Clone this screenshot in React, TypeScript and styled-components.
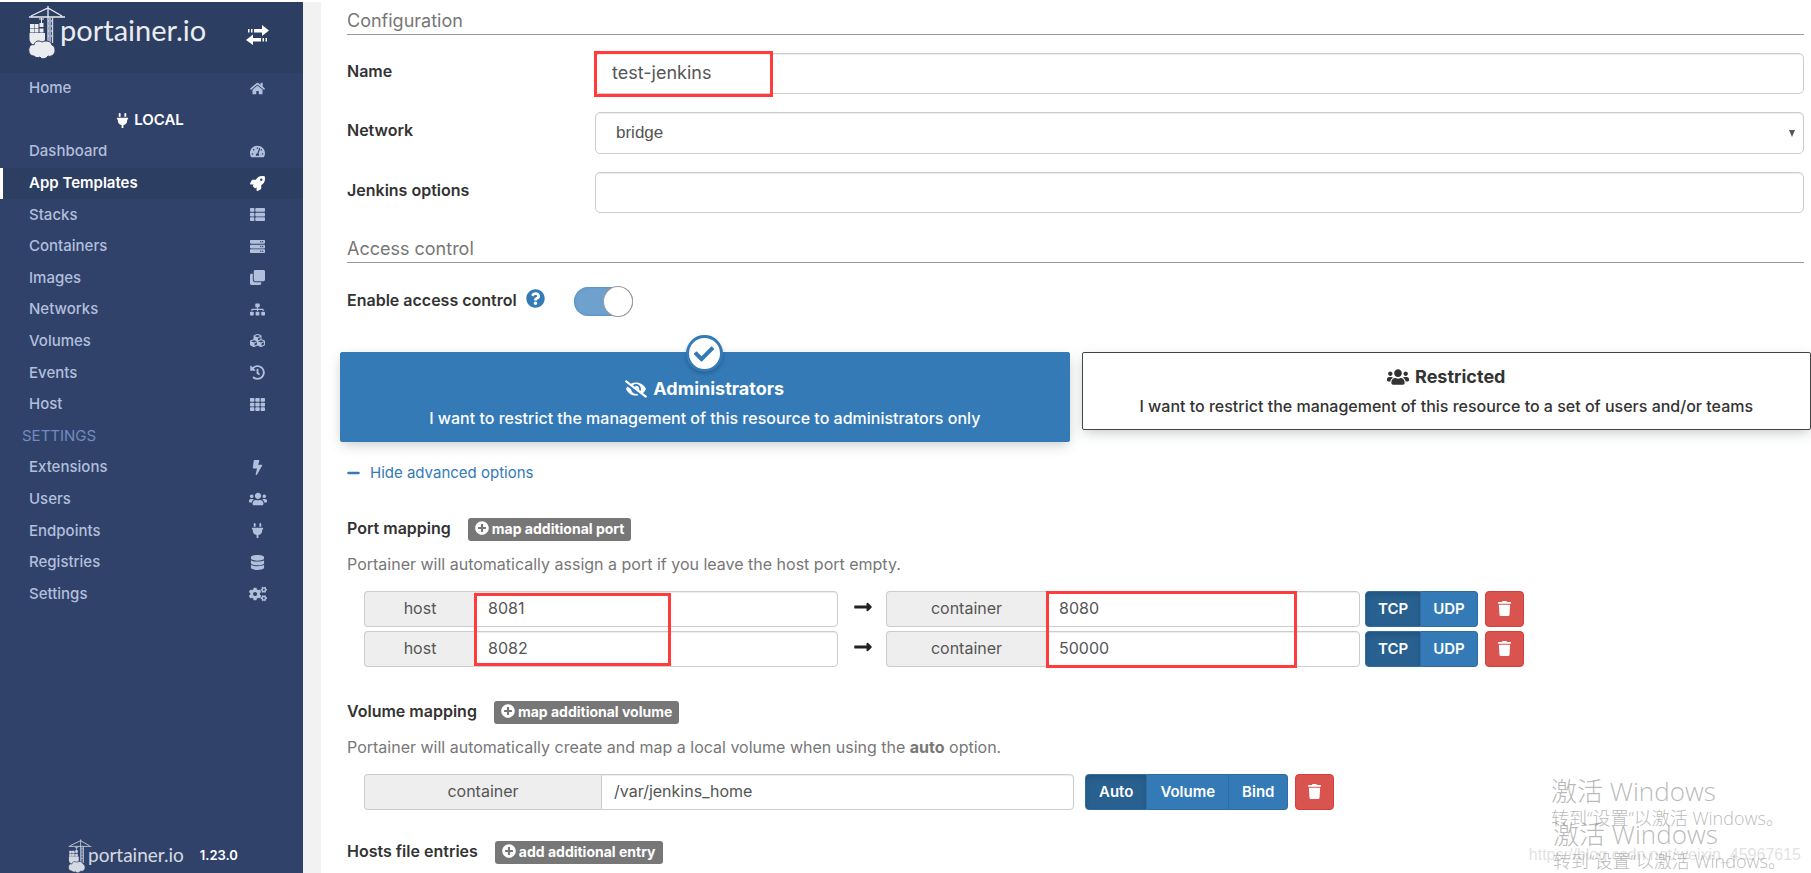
import React, { ReactNode } from "react";
import styled, { createGlobalStyle, css } from "styled-components";
import {
  FaBolt, FaCheck, FaClone, FaCogs, FaCubes, FaDatabase, FaEyeSlash, FaHistory, FaHome,
  FaLongArrowAltRight, FaMinus, FaPlug, FaPlusCircle, FaQuestionCircle, FaRocket, FaServer,
  FaSitemap, FaTachometerAlt, FaTh, FaThList, FaTrash, FaUsers,
} from "react-icons/fa";

const blue = "#337ab7";

const GlobalStyle = createGlobalStyle`
  *, *::before, *::after { box-sizing: border-box; }
  body {
    margin: 0;
    background: #fff;
    color: #333;
    font-family: Inter, "Noto Sans CJK SC", sans-serif;
    font-size: 15px;
    line-height: 20px;
  }
  button, input { font-family: inherit; }
`;

const Page = styled.div`
  position: relative;
  display: flex;
  height: 100vh;
  padding-top: 2px;
  overflow: hidden;
`;

/* ---------- sidebar ---------- */

const Sidebar = styled.aside`
  display: flex;
  flex: none;
  flex-direction: column;
  width: 303px;
  background: #30426a;
`;

const SidebarHeader = styled.div`
  display: flex;
  flex: none;
  align-items: flex-start;
  justify-content: space-between;
  height: 71px;
  padding: 4px 34px 0 28px;
  background: #2d3e63;
`;

const Brand = styled.a<{ $small?: boolean }>`
  display: flex;
  align-items: flex-start;
  color: #fff;
  font-family: Lato, sans-serif;
  font-size: ${(p) => (p.$small ? "19px" : "29px")};
  font-weight: 400;
  line-height: ${(p) => (p.$small ? "32px" : "48px")};
  text-decoration: none;
  opacity: ${(p) => (p.$small ? 0.8 : 0.9)};

  svg {
    flex: none;
    width: ${(p) => (p.$small ? "24px" : "38px")};
    height: ${(p) => (p.$small ? "35px" : "54px")};
    margin-right: ${(p) => (p.$small ? "-4px" : "-6px")};
  }
`;

const IconButton = styled.button`
  display: flex;
  margin: 19px 0 0;
  padding: 0;
  border: 0;
  background: none;
  color: #fff;
`;

const Menu = styled.ul`
  display: grid;
  flex: none;
  grid-auto-rows: 1fr;
  height: 537px;
  margin: 0;
  padding: 0;
  list-style: none;
`;

const MenuLink = styled.a<{ $active?: boolean }>`
  display: flex;
  align-items: center;
  justify-content: space-between;
  height: 100%;
  padding: 0 37px 1px ${(p) => (p.$active ? "26px" : "29px")};
  border-left: ${(p) => (p.$active ? "3px solid #fff" : "0")};
  background: ${(p) => (p.$active ? "#2d3e63" : "transparent")};
  color: ${(p) => (p.$active ? "#fff" : "#b2bfdc")};
  font-weight: ${(p) => (p.$active ? 600 : 500)};
  text-decoration: none;
`;

const MenuIcon = styled.span`
  display: flex;
  justify-content: center;
  width: 17px;
  font-size: 15px;

  svg { flex: none; }
`;

const EndpointName = styled.li`
  display: flex;
  align-items: center;
  justify-content: center;
  gap: 4px;
  padding-right: 4px;
  color: #fff;
  font-weight: 600;
`;

const MenuTitle = styled.li`
  display: flex;
  align-items: center;
  padding-left: 22px;
  color: #738bc0;
`;

const SidebarFooter = styled.div`
  display: flex;
  gap: 16px;
  height: 34px;
  margin-top: auto;
  padding-left: 68px;
  color: #fff;
  font-size: 13px;
  font-weight: 600;
  line-height: 32px;
`;

/* ---------- content ---------- */

const Content = styled.main`
  flex: 1;
  min-width: 0;
  border-left: 18px solid #f2f2f2;
`;

const Section = styled.section`
  padding: 0 7px 0 26px;
`;

const SectionTitle = styled.h2`
  margin: 0;
  padding: 8px 0 2px;
  border-bottom: 1px solid #999;
  color: #777;
  font-size: 18px;
  font-weight: 400;
  line-height: 22px;
`;

const FormRows = styled.div`
  display: grid;
  gap: 18px;
  padding: 18px 0 17px;
`;

const FormRow = styled.div`
  display: grid;
  grid-template-columns: 248px 1fr;
`;

const Label = styled.label`
  padding: 8px 0;
  font-size: 16px;
  font-weight: 600;
`;

const fieldStyle = css`
  width: 100%;
  min-width: 0;
  border: 1px solid #ccc;
  border-radius: 5px;
  background: #fff;
  box-shadow: inset 0 1px 1px rgba(0, 0, 0, 0.075);
  color: #555;
  outline: none;
`;

const FieldWrap = styled.div`
  position: relative;
`;

const TextInput = styled.input`
  ${fieldStyle}
  display: block;
  height: 41px;
  padding: 0 16px 2px;
  font-size: 18px;
`;

const Select = styled.select`
  ${fieldStyle}
  display: block;
  height: 42px;
  padding: 0 20px 2px;
  appearance: none;
  font-family: "Liberation Sans", sans-serif;
  font-size: 17px;
`;

const SelectArrow = styled.svg`
  position: absolute;
  top: 18px;
  right: 9px;
  width: 6px;
  height: 7px;
  pointer-events: none;
`;

const Highlight = styled.div<{ $box: string; $width: number }>`
  position: absolute;
  z-index: 1;
  inset: ${(p) => p.$box};
  width: ${(p) => p.$width}px;
  border: 3px solid #ff3b3b;
  pointer-events: none;
`;

const ToggleRow = styled.div`
  display: flex;
  align-items: center;
  height: 30px;
  margin: 23px 0 36px;
  color: ${blue};

  label { padding: 0 0 2px; color: #333; }
  svg { margin: 0 29px 5px 9px; font-size: 19px; }
`;

const Switch = styled.input`
  position: relative;
  width: 59px;
  height: 29px;
  margin: 0;
  border-radius: 15px;
  appearance: none;
  background: #6fa1cd;
  box-shadow: inset 0 0 2px 1px #5b93c5;

  &::after {
    position: absolute;
    top: -1px;
    right: 0;
    width: 30px;
    height: 31px;
    border: 1px solid #999;
    border-radius: 50%;
    background: #fff;
    content: "";
  }
`;

const BoxSelector = styled.div`
  display: grid;
  grid-template-columns: 1fr 1fr;
  gap: 12px;
  align-items: start;
  padding-left: 19px;
`;

const Choice = styled.label<{ $selected?: boolean }>`
  position: relative;
  display: flex;
  flex-direction: column;
  align-items: center;
  gap: 8px;
  padding: ${(p) => (p.$selected ? "25px 10px 13px" : "13px 10px")};
  border: 1px solid ${(p) => (p.$selected ? blue : "#444")};
  border-radius: 2px;
  background: ${(p) => (p.$selected ? blue : "#fff")};
  box-shadow: 0 4px 12px -2px rgba(50, 70, 70, 0.3);
  color: ${(p) => (p.$selected ? "#fff" : "#333")};
  font-size: 16px;
  font-weight: 500;

  input { position: absolute; opacity: 0; }
`;

const ChoiceTitle = styled.span`
  display: flex;
  align-items: center;
  gap: 6px;
  font-size: 18px;
  font-weight: 700;
  line-height: 22px;

  svg { font-size: 22px; }
`;

const CheckBadge = styled.span`
  position: absolute;
  top: -18px;
  left: 50%;
  display: flex;
  align-items: center;
  justify-content: center;
  width: 37px;
  height: 37px;
  margin-left: -19px;
  border: 3px solid ${blue};
  border-radius: 50%;
  background: #fff;
  box-shadow: 0 2px 5px -1px rgba(0, 0, 0, 0.3);
  color: ${blue};
  font-size: 20px;
`;

const AdvancedLink = styled.a`
  display: inline-flex;
  align-items: center;
  gap: 10px;
  margin: 21px 0 34px;
  color: ${blue};
  text-decoration: none;

  svg { width: 13px; height: 14px; }
`;

const Heading = styled.div`
  display: flex;
  align-items: center;
  gap: 17px;
  height: 22px;
  font-size: 16px;
  font-weight: 600;
`;

const AddButton = styled.button`
  display: flex;
  align-items: center;
  gap: 3px;
  height: 23px;
  margin-top: 2px;
  padding: 0 7px 2px;
  border: 0;
  border-radius: 3px;
  background: #777;
  color: #fff;
  font-size: 14px;
  font-weight: 700;
`;

const Hint = styled.p`
  margin: 15px 0 17px;
  color: #777;
  font-size: 16px;
`;

const Mappings = styled.div`
  position: relative;
  display: grid;
  gap: 4px;
  padding-left: 17px;
`;

const MappingRow = styled.div`
  display: flex;
  height: 36px;
`;

const InputGroup = styled.div<{ $width: number }>`
  position: relative;
  display: flex;
  flex: 0 1 ${(p) => p.$width}px;
  min-width: 0;
`;

const Addon = styled.label<{ $width: number }>`
  flex: 0 0 ${(p) => p.$width}px;
  border: 1px solid #ccc;
  border-right: 0;
  border-radius: 4px 0 0 4px;
  background: #eee;
  color: #555;
  font-size: 16px;
  line-height: 33px;
  text-align: center;
`;

const GroupInput = styled.input`
  ${fieldStyle}
  padding: 0 12px 2px;
  border-radius: 0 4px 4px 0;
  font-size: 16px;
`;

const Arrow = styled.span`
  flex: none;
  width: 48px;
  padding: 6px 0 0 16px;
  color: #222;

  svg { display: block; width: 18px; height: 20px; }
`;

const ButtonGroup = styled.div<{ $gap: number; $pad: number }>`
  display: flex;
  flex: none;
  margin: 0 7px 0 ${(p) => p.$gap}px;

  button { padding: 0 ${(p) => p.$pad}px 2px; }
`;

const Option = styled.button<{ $active?: boolean }>`
  border: 1px solid #2e6da4;
  border-left-width: 0;
  background: ${(p) => (p.$active ? "#286090" : blue)};
  box-shadow: ${(p) => (p.$active ? "inset 0 3px 5px rgba(0, 0, 0, 0.125)" : "none")};
  color: #fff;
  font-size: 15px;
  font-weight: 600;

  &:first-child { border-left-width: 1px; border-radius: 4px 0 0 4px; }
  &:last-child { border-radius: 0 4px 4px 0; }
`;

const DeleteButton = styled.button`
  display: flex;
  flex: none;
  align-items: center;
  justify-content: center;
  width: 39px;
  padding: 0 0 2px;
  border: 1px solid #d43f3a;
  border-radius: 4px;
  background: #d9534f;
  color: #fff;
  font-size: 15px;
`;

const SubSection = styled.div<{ $space: number }>`
  margin-bottom: ${(p) => p.$space}px;
`;

/* ---------- overlaid watermarks ---------- */

const Watermark = styled.div<{ $right: number; $bottom: number }>`
  position: absolute;
  right: ${(p) => p.$right}px;
  bottom: ${(p) => p.$bottom}px;
  width: 230px;
  color: rgba(125, 125, 125, 0.55);
  font-family: "Open Sans", "Noto Sans CJK SC", sans-serif;
  font-size: 18px;
  font-weight: 300;
  line-height: 22px;
  white-space: nowrap;
  pointer-events: none;

  strong { display: block; font-size: 26px; font-weight: 300; line-height: 32px; }
`;

const BlogUrl = styled.div`
  position: absolute;
  right: 10px;
  bottom: 8px;
  color: rgba(205, 205, 205, 0.6);
  font-family: "Liberation Sans", sans-serif;
  font-size: 16px;
  pointer-events: none;
`;

function Crane() {
  return (
    <svg viewBox="0 0 38 54" fill="none" aria-hidden="true">
      <path d="M1 11h36M3 10 20 2l14 8M20 0v12" stroke="#fff" strokeWidth="1.3" />
      <path d="M20 11v26M24.5 11v26M20 15h4M20 20h4M20 25h4M20 30h4" stroke="#dfe5f1" strokeWidth="1.4" />
      <path d="M22 12v26" stroke="#a5b2cf" strokeWidth="2" />
      <path d="M13.500 12v9M11 13h5" stroke="#fff" strokeWidth="1" />
      <path fill="#fff" d="M2 18h4v4H2zM6.500 18h4v4h-4zM2 22.500h4v4H2zM6.500 22.500h4v4h-4zM11.500 17h4v4h-4zM11.500 22.500h4v4h-4zM1.500 27h15.500v6c0 3-2 5-4 6H6c-3-1-4.500-4-4.500-6z" />
      <path fill="#fff" stroke="#2d3e63" strokeWidth="1" d="M6 50C2 50 0 46 1 42c1-3 3-4 5-3 1-4 4-5 8-3 4-2 9-1 10 3 3 1 4 6 2 9-2 2-4 3-6 2-2 3-6 4-8 1-2 1-4 1-6-1z" />
    </svg>
  );
}

function SwapArrows() {
  return (
    <svg width="23" height="20" viewBox="0 0 23 20" fill="currentColor" aria-hidden="true">
      <path d="M2 4h1.500v3.500H2zM5 4h1.500v3.500H5zM8 4h8V0l7 5.500-7 5.500V7.500H8zM21 13h-1.500v3.500H21zM18 13h-1.500v3.500H18zM15 13H7V9.500L0 15l7 5v-3.500h8z" />
    </svg>
  );
}

type Item = { text: string; icon: ReactNode; active?: boolean };

const environmentItems: Item[] = [
  { text: "Dashboard", icon: <FaTachometerAlt /> },
  { text: "App Templates", icon: <FaRocket />, active: true },
  { text: "Stacks", icon: <FaThList /> },
  { text: "Containers", icon: <FaServer /> },
  { text: "Images", icon: <FaClone /> },
  { text: "Networks", icon: <FaSitemap /> },
  { text: "Volumes", icon: <FaCubes /> },
  { text: "Events", icon: <FaHistory /> },
  { text: "Host", icon: <FaTh /> },
];

const settingsItems: Item[] = [
  { text: "Extensions", icon: <FaBolt /> },
  { text: "Users", icon: <FaUsers size={18} /> },
  { text: "Endpoints", icon: <FaPlug /> },
  { text: "Registries", icon: <FaDatabase /> },
  { text: "Settings", icon: <FaCogs size={18} /> },
];

const ports = [
  { host: "8081", container: "8080" },
  { host: "8082", container: "50000" },
];

function MenuItem({ text, icon, active }: Item) {
  return (
    <li>
      <MenuLink href="#" $active={active}>
        {text}
        <MenuIcon>{icon}</MenuIcon>
      </MenuLink>
    </li>
  );
}

function WindowsNotice({ right, bottom }: { right: number; bottom: number }) {
  return (
    <Watermark $right={right} $bottom={bottom}>
      <strong>激活 Windows</strong>
      转到“设置”以激活 Windows。
    </Watermark>
  );
}

export default function App() {
  return (
    <>
      <GlobalStyle />
      <Page>
        <Sidebar>
          <SidebarHeader>
            <Brand href="#"><Crane />portainer.io</Brand>
            <IconButton type="button" aria-label="Toggle sidebar"><SwapArrows /></IconButton>
          </SidebarHeader>
          <Menu>
            <MenuItem text="Home" icon={<FaHome />} />
            <EndpointName><FaPlug />LOCAL</EndpointName>
            {environmentItems.map((item) => <MenuItem key={item.text} {...item} />)}
            <MenuTitle>SETTINGS</MenuTitle>
            {settingsItems.map((item) => <MenuItem key={item.text} {...item} />)}
          </Menu>
          <SidebarFooter>
            <Brand href="#" $small><Crane />portainer.io</Brand>
            1.23.0
          </SidebarFooter>
        </Sidebar>

        <Content>
          <Section>
            <SectionTitle>Configuration</SectionTitle>
            <FormRows>
              <FormRow>
                <Label htmlFor="name">Name</Label>
                <FieldWrap>
                  <TextInput id="name" defaultValue="test-jenkins" />
                  <Highlight $box="-2px auto -3px -1px" $width={179} />
                </FieldWrap>
              </FormRow>
              <FormRow>
                <Label htmlFor="network">Network</Label>
                <FieldWrap>
                  <Select id="network" defaultValue="bridge"><option>bridge</option></Select>
                  <SelectArrow viewBox="0 0 6 7"><path d="M0 0h6L3 7z" fill="#555" /></SelectArrow>
                </FieldWrap>
              </FormRow>
              <FormRow>
                <Label htmlFor="options">Jenkins options</Label>
                <TextInput id="options" />
              </FormRow>
            </FormRows>
            <SectionTitle>Access control</SectionTitle>
            <ToggleRow>
              <Label htmlFor="access">Enable access control</Label>
              <FaQuestionCircle />
              <Switch id="access" type="checkbox" defaultChecked />
            </ToggleRow>
          </Section>

          <BoxSelector>
            <Choice $selected>
              <input type="radio" name="ownership" defaultChecked />
              <CheckBadge><FaCheck /></CheckBadge>
              <ChoiceTitle><FaEyeSlash />Administrators</ChoiceTitle>
              I want to restrict the management of this resource to administrators only
            </Choice>
            <Choice>
              <input type="radio" name="ownership" />
              <ChoiceTitle><FaUsers />Restricted</ChoiceTitle>
              I want to restrict the management of this resource to a set of users and/or teams
            </Choice>
          </BoxSelector>

          <Section>
            <AdvancedLink href="#"><FaMinus />Hide advanced options</AdvancedLink>

            <SubSection $space={33}>
              <Heading>Port mapping<AddButton type="button"><FaPlusCircle />map additional port</AddButton></Heading>
              <Hint>Portainer will automatically assign a port if you leave the host port empty.</Hint>
              <Mappings>
                {ports.map((port, i) => (
                  <MappingRow key={port.host}>
                    <InputGroup $width={474}>
                      <Addon $width={111} htmlFor={`host-${i}`}>host</Addon>
                      <GroupInput id={`host-${i}`} defaultValue={port.host} />
                      {i === 0 && <Highlight $box="2px auto -39px 110px" $width={197} />}
                    </InputGroup>
                    <Arrow><FaLongArrowAltRight /></Arrow>
                    <InputGroup $width={474}>
                      <Addon $width={160} htmlFor={`container-${i}`}>container</Addon>
                      <GroupInput id={`container-${i}`} defaultValue={port.container} />
                      {i === 0 && <Highlight $box="0 auto -41px 160px" $width={251} />}
                    </InputGroup>
                    <ButtonGroup $gap={5} $pad={12}>
                      <Option type="button" $active>TCP</Option>
                      <Option type="button">UDP</Option>
                    </ButtonGroup>
                    <DeleteButton type="button" aria-label="Remove port"><FaTrash /></DeleteButton>
                  </MappingRow>
                ))}
              </Mappings>
            </SubSection>

            <SubSection $space={30}>
              <Heading>Volume mapping<AddButton type="button"><FaPlusCircle />map additional volume</AddButton></Heading>
              <Hint>
                Portainer will automatically create and map a local volume when using the <b>auto</b> option.
              </Hint>
              <Mappings>
                <MappingRow>
                  <InputGroup $width={710}>
                    <Addon $width={237} htmlFor="volume">container</Addon>
                    <GroupInput id="volume" defaultValue="/var/jenkins_home" />
                  </InputGroup>
                  <ButtonGroup $gap={11} $pad={13}>
                    <Option type="button" $active>Auto</Option>
                    <Option type="button">Volume</Option>
                    <Option type="button">Bind</Option>
                  </ButtonGroup>
                  <DeleteButton type="button" aria-label="Remove volume"><FaTrash /></DeleteButton>
                </MappingRow>
              </Mappings>
            </SubSection>

            <Heading>Hosts file entries<AddButton type="button"><FaPlusCircle />add additional entry</AddButton></Heading>
          </Section>
        </Content>

        <BlogUrl>https://blog.csdn.net/weixin_45967615</BlogUrl>
        <WindowsNotice right={30} bottom={44} />
        <WindowsNotice right={28} bottom={1} />
      </Page>
    </>
  );
}
